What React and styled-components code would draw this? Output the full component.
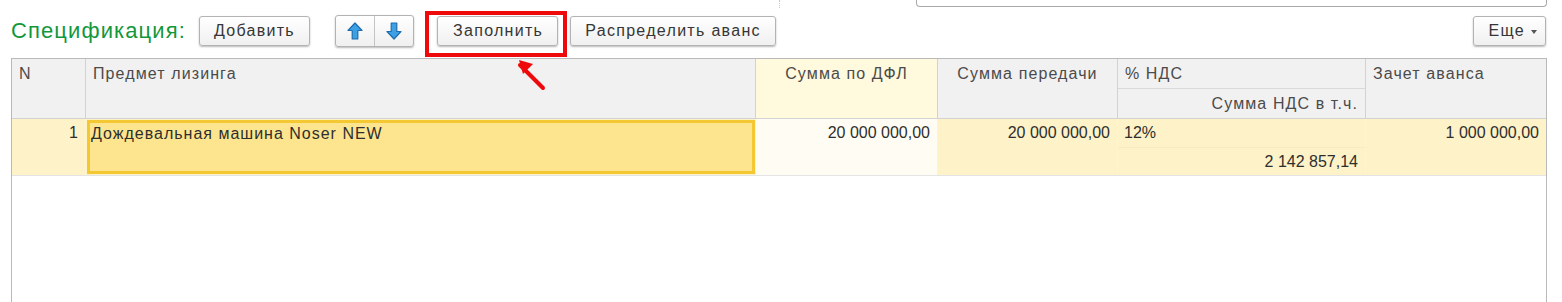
import React from 'react'
import styled, { createGlobalStyle } from 'styled-components'

const GlobalStyle = createGlobalStyle`
  html, body {
    margin: 0;
    padding: 0;
    background: #fff;
    overflow: hidden;
  }
  body {
    font-family: "Liberation Sans", Arial, sans-serif;
    color: #333;
  }
`

const Page = styled.div`
  width: 1562px;
  height: 302px;
  display: flex;
  flex-direction: column;
`

const TopStrip = styled.div`
  display: flex;
  height: 8px;
  align-items: stretch;
`

const DottedDivider = styled.div`
  margin-left: 779px;
  width: 0;
  border-left: 1px dotted #c8c8c8;
`

const FieldEdge = styled.div`
  margin-left: 136px;
  width: 629px;
  height: 6px;
  border: 1px solid #a9a9a9;
  border-top: none;
  border-radius: 0 0 4px 4px;
`

const Toolbar = styled.div`
  display: flex;
  align-items: center;
  height: 30px;
  margin-top: 8px;
  padding: 0 16px 0 11px;
`

const Title = styled.div`
  font-size: 22px;
  color: #12973b;
  margin-right: 13px;
  letter-spacing: 1.1px;
`

const Button = styled.button`
  height: 30px;
  padding: 0 ${p => p.$right || 14}px 0 ${p => p.$left || 14}px;
  font-family: "Liberation Sans", Arial, sans-serif;
  font-size: 16px;
  letter-spacing: 1.3px;
  color: #363636;
  background: linear-gradient(#ffffff, #f0f0f0);
  border: 1px solid #b3b3b3;
  border-radius: 3px;
  box-shadow: 0 1px 2px rgba(0, 0, 0, 0.28);
  margin-left: ${p => p.$gap || 0}px;
  display: flex;
  align-items: center;
  gap: 6px;
  white-space: nowrap;
  cursor: pointer;
`

const ArrowGroup = styled.div`
  display: flex;
  margin-left: 25px;
  height: 30px;
  border: 1px solid #b3b3b3;
  border-radius: 3px;
  box-shadow: 0 1px 2px rgba(0, 0, 0, 0.28);
  background: linear-gradient(#ffffff, #f0f0f0);
  overflow: hidden;
`

const ArrowButton = styled.div`
  width: 38px;
  display: flex;
  align-items: center;
  justify-content: center;
  & + & {
    border-left: 1px solid #c4c4c4;
  }
`

const HighlightWrap = styled.div`
  position: relative;
  margin-left: 23px;
  display: flex;
`

const RedFrame = styled.div`
  position: absolute;
  left: -12px;
  right: -9px;
  top: -5px;
  bottom: -11px;
  border: 4px solid #ee0a0a;
  pointer-events: none;
`

const Pointer = styled.svg`
  position: absolute;
  left: 71px;
  top: 41px;
  overflow: visible;
`

const Spacer = styled.div`
  flex: 1;
`

const Caret = styled.span`
  width: 0;
  height: 0;
  border-left: 3.5px solid transparent;
  border-right: 3.5px solid transparent;
  border-top: 4px solid #555;
  margin-top: 2px;
`

const Table = styled.div`
  margin: 12px 15px 0 11px;
  flex: 1;
  border: 1px solid #b9b9b9;
  border-bottom: none;
  display: flex;
  flex-direction: column;
`

const cols = '74px 670px 182px 180px 248px 1fr'

const HeadGrid = styled.div`
  display: grid;
  grid-template-columns: ${cols};
  grid-template-rows: 30px 29px;
  background: #f1f1f1;
  border-bottom: 1px solid #d2d2d2;
`

const HeadCell = styled.div`
  grid-row: ${p => p.$row || '1 / span 2'};
  grid-column: ${p => p.$col};
  background: ${p => p.$bg || '#f1f1f1'};
  border-right: ${p => (p.$last ? 'none' : '1px solid #d2d2d2')};
  border-bottom: ${p => (p.$split ? '1px solid #d9d9d9' : 'none')};
  font-size: 16px;
  letter-spacing: 1.1px;
  color: #4b4b4b;
  padding: 6px 7px 0 7px;
  text-align: ${p => p.$align || 'left'};
  white-space: nowrap;
`

const DataGrid = styled.div`
  display: grid;
  grid-template-columns: ${cols};
  grid-template-rows: 29px 27px;
  background: #fdf2c8;
  border-bottom: 1px solid #e4e4e4;
`

const DataCell = styled.div`
  grid-row: ${p => p.$row || '1 / span 2'};
  grid-column: ${p => p.$col};
  background: ${p => p.$bg || '#fdf2c8'};
  border-right: ${p => (p.$last ? 'none' : '1px solid #fbf4dc')};
  border-bottom: ${p => (p.$split ? '1px solid #f7ebc0' : 'none')};
  font-size: 16px;
  letter-spacing: ${p => (p.$num ? 0 : 1)}px;
  color: #2e2e2e;
  padding: 5px 7px 0 6px;
  text-align: ${p => p.$align || 'left'};
  white-space: nowrap;
`

const ActiveCell = styled.div`
  grid-row: 1 / span 2;
  grid-column: 2;
  margin: 1px;
  background: #fde58f;
  border: 3px solid #f3c833;
  font-size: 16px;
  letter-spacing: 1px;
  color: #2e2e2e;
  padding: 2px 3px 0 1px;
  white-space: nowrap;
`

const ArrowIcon = ({ down }) => (
  <svg width="16" height="18" viewBox="0 0 16 18">
    <path
      d="M8 1 L15 8.5 L10.8 8.5 L10.8 17 L5.2 17 L5.2 8.5 L1 8.5 Z"
      fill="#3d9fe4"
      stroke="#1d6cae"
      strokeWidth="1.2"
      strokeLinejoin="round"
      transform={down ? 'rotate(180 8 9)' : undefined}
    />
  </svg>
)

export default function App() {
  return (
    <Page>
      <GlobalStyle />
      <TopStrip>
        <DottedDivider />
        <FieldEdge />
      </TopStrip>
      <Toolbar>
        <Title>Спецификация:</Title>
        <Button>Добавить</Button>
        <ArrowGroup>
          <ArrowButton>
            <ArrowIcon />
          </ArrowButton>
          <ArrowButton>
            <ArrowIcon down />
          </ArrowButton>
        </ArrowGroup>
        <HighlightWrap>
          <Button $left={15} $right={14}>Заполнить</Button>
          <RedFrame />
          <Pointer width="40" height="34" viewBox="0 0 40 34">
            <line x1="12" y1="8" x2="35" y2="31" stroke="#ee0a0a" strokeWidth="4" strokeLinecap="round" />
            <path d="M11 3 L25 7 L15 17 Z" fill="#ee0a0a" />
          </Pointer>
        </HighlightWrap>
        <Button $gap={12}>Распределить аванс</Button>
        <Spacer />
        <Button $left={15} $right={8}>
          Еще
          <Caret />
        </Button>
      </Toolbar>
      <Table>
        <HeadGrid>
          <HeadCell $col={1}>N</HeadCell>
          <HeadCell $col={2}>Предмет лизинга</HeadCell>
          <HeadCell $col={3} $bg="#fff9dd" $align="center">Сумма по ДФЛ</HeadCell>
          <HeadCell $col={4} $align="center">Сумма передачи</HeadCell>
          <HeadCell $col={5} $row="1" $split>% НДС</HeadCell>
          <HeadCell $col={5} $row="2" $align="right">Сумма НДС в т.ч.</HeadCell>
          <HeadCell $col={6} $last>Зачет аванса</HeadCell>
        </HeadGrid>
        <DataGrid>
          <DataCell $col={1} $align="right" $num>1</DataCell>
          <ActiveCell>Дождевальная машина Noser NEW</ActiveCell>
          <DataCell $col={3} $bg="#fffdf3" $align="right" $num>20 000 000,00</DataCell>
          <DataCell $col={4} $align="right" $num>20 000 000,00</DataCell>
          <DataCell $col={5} $row="1" $split $num>12%</DataCell>
          <DataCell $col={5} $row="2" $align="right" $num>2 142 857,14</DataCell>
          <DataCell $col={6} $align="right" $last $num>1 000 000,00</DataCell>
        </DataGrid>
      </Table>
    </Page>
  )
}
